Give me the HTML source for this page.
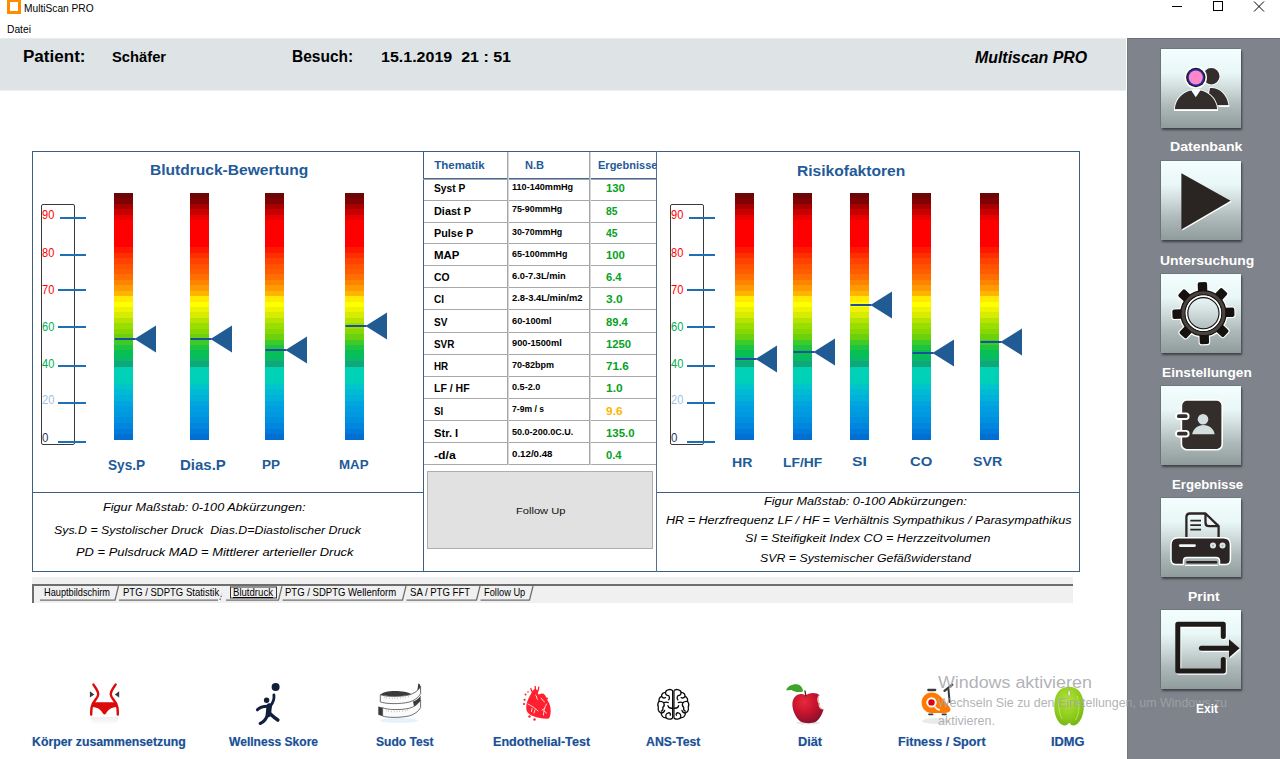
<!DOCTYPE html>
<html lang="de">
<head>
<meta charset="utf-8">
<title>MultiScan PRO</title>
<style>
html,body{margin:0;padding:0}
body{width:1280px;height:759px;position:relative;overflow:hidden;background:#fff;font-family:"Liberation Sans",sans-serif;color:#000}
div,span,svg{box-sizing:border-box}
.a{position:absolute}
.t{position:absolute;white-space:pre;line-height:1;transform-origin:0 0}
#header{left:0;top:38px;width:1126px;height:53px;background:#dee3e6;border-bottom:1px solid #ecf0f2;border-top:1px solid #e9edef}
#sidebar{left:1127px;top:38px;width:153px;height:721px;background:#7f838b;border-top:1px solid #6b6f76;border-left:1px solid #73777e}
.btn{position:absolute;left:1161px;width:80px;height:79px;background:linear-gradient(180deg,#f3fefe 0%,#eaf7f7 30%,#cfdbdb 50%,#aebaba 72%,#909c9c 100%);box-shadow:1px 2px 2px rgba(40,44,50,.75),-1px -1px 0 rgba(110,114,122,.8)}
.btn svg{position:absolute;left:0;top:0}
.panel{border:1px solid #3f5f82}
.hl{position:absolute;height:1px;background:#3f5f82}
.vl{position:absolute;width:1px;background:#3f5f82}
.bar{position:absolute;width:19px;top:193px;height:247px;background:linear-gradient(180deg,#6c0606 0.00px,#6c0606 5.43px,#800202 5.43px,#800202 10.86px,#a70000 10.86px,#a70000 16.28px,#c90000 16.28px,#c90000 21.71px,#eb0000 21.71px,#eb0000 27.14px,#ff0000 27.14px,#ff0000 32.57px,#ff0000 32.57px,#ff0000 38.00px,#ff0000 38.00px,#ff0000 43.43px,#ff0000 43.43px,#ff0000 48.85px,#ff0000 48.85px,#ff0000 54.28px,#ff1800 54.28px,#ff1800 59.71px,#ff2e00 59.71px,#ff2e00 65.14px,#ff4200 65.14px,#ff4200 70.57px,#ff5100 70.57px,#ff5100 75.99px,#ff5b00 75.99px,#ff5b00 81.42px,#ff6e00 81.42px,#ff6e00 86.85px,#ff8300 86.85px,#ff8300 92.28px,#ff9a00 92.28px,#ff9a00 97.71px,#ffb500 97.71px,#ffb500 103.13px,#ffea00 103.13px,#ffea00 108.56px,#ffff00 108.56px,#ffff00 113.99px,#edf300 113.99px,#edf300 119.42px,#d7ec00 119.42px,#d7ec00 124.85px,#b4e400 124.85px,#b4e400 130.27px,#9add00 130.27px,#9add00 135.70px,#88d700 135.70px,#88d700 141.13px,#69d10e 141.13px,#69d10e 146.56px,#3eca28 146.56px,#3eca28 151.99px,#1dc43f 151.99px,#1dc43f 157.42px,#08bf54 157.42px,#08bf54 162.84px,#08b966 162.84px,#08b966 168.27px,#10a878 168.27px,#10a878 173.70px,#00d3b5 173.70px,#00d3b5 179.34px,#00d1b7 179.34px,#00d1b7 184.98px,#00cfba 184.98px,#00cfba 190.62px,#00c5c9 190.62px,#00c5c9 196.25px,#00bbd3 196.25px,#00bbd3 201.89px,#00b1d8 201.89px,#00b1d8 207.53px,#00a6dd 207.53px,#00a6dd 213.17px,#009ee0 213.17px,#009ee0 218.81px,#0099e0 218.81px,#0099e0 224.45px,#0090e0 224.45px,#0090e0 230.08px,#0086df 230.08px,#0086df 235.72px,#007bd9 235.72px,#007bd9 241.36px,#006ed3 241.36px,#006ed3 247.00px)}
.mk{position:absolute;width:43px;height:28px}
.tick{position:absolute;height:2px;background:#1f6fb5}
.scalebox{position:absolute;width:34px;height:241px;top:204px;border:1px solid #3a3a3a;border-radius:2px}
.grow{position:absolute;left:424px;width:232px;height:1px;background:#a9a9a9}
.gcol{position:absolute;top:152px;width:2px;height:313px;background:linear-gradient(90deg,#a6a6a6 0,#a6a6a6 1px,#d6d6d6 1px,#d6d6d6 2px)}
#followup{left:427px;top:471px;width:226px;height:78px;background:#e1e1e1;border:1px solid #adadad}
#tabstrip{left:32px;top:577px;width:1041px;height:26px;background:#f0f0f0}
.tabline{position:absolute;background:#6d6d6d}
.lbl{text-shadow:0 0 1px rgba(31,90,153,.35)}
.wm{color:rgba(163,165,170,.86)}

</style>
</head>
<body>
<div id="titlebar" class="a" style="left:0;top:0;width:1280px;height:22px">
<div class="a" style="left:7px;top:-1px;width:14px;height:15px;border:3px solid #ff8c00;background:#fff"></div>
<span class="t" style="left:24.0px;top:3px;font-size:11px;transform:scaleX(0.926);">MultiScan PRO</span>
<svg class="a" style="left:1165px;top:0" width="110" height="16" viewBox="0 0 110 16" fill="none" stroke="#000" stroke-width="1"><path d="M7 6.5h10"/><rect x="48.5" y="1.5" width="9" height="9"/><path d="M89 1.5l10 10M99 1.5l-10 10"/></svg>
</div>
<div id="menubar" class="a" style="left:0;top:22px;width:1280px;height:16px"></div>
<span class="t" style="left:6.5px;top:24px;font-size:11.2px;transform:scaleX(0.917);">Datei</span>
<div id="header" class="a">
</div>
<span class="t" style="left:22.9px;top:49px;font-size:16px;font-weight:bold;transform:scaleX(1.065);">Patient:</span>
<span class="t" style="left:111.5px;top:50px;font-size:14.3px;font-weight:bold;transform:scaleX(1.031);">Schäfer</span>
<span class="t" style="left:292.2px;top:49px;font-size:16px;font-weight:bold;transform:scaleX(0.969);">Besuch:</span>
<span class="t" style="left:380.5px;top:50px;font-size:14.3px;font-weight:bold;transform:scaleX(1.120);">15.1.2019  21 : 51</span>
<span class="t" style="left:975.3px;top:50px;font-size:16px;font-weight:bold;font-style:italic;transform:scaleX(0.993);">Multiscan PRO</span>
<div id="sidebar" class="a"></div>
<div class="btn" style="top:49px"><svg width="80" height="79" viewBox="0 0 80 79"><g stroke="#fff" stroke-width="1.600" fill="#332e2c" paint-order="stroke"><circle cx="50.300" cy="27.200" r="8.200"/><path d="M49 39C59 38.500 66 46 67.500 56.200H46Z"/><path d="M13.800 60.200C14.600 48.500 24 41 34.800 41C45.600 41 55.200 48.500 56.200 60.200Z"/></g><path d="M13 61.300H57M57.600 57.300H68.400" stroke="#fff" stroke-width="1.400"/><path d="M29.600 40.600L34.800 48.300L40 40.600Z" fill="#f4ffff"/><circle cx="34.800" cy="28.500" r="11.200" fill="#fff"/><circle cx="34.800" cy="28.500" r="9.700" fill="#1e1a18"/><circle cx="34.800" cy="28.500" r="8.400" fill="#2430b8"/><circle cx="34.800" cy="28.500" r="7" fill="#ff86c8"/></svg></div>
<div class="btn" style="top:160.5px"><svg width="80" height="79" viewBox="0 0 80 79"><path d="M21.400 13.200L70.800 40.700L21.400 69.600Z" fill="#fff"/><path d="M20.400 12.200L69.600 39.800L20.400 68.500Z" fill="#2a2422"/></svg></div>
<div class="btn" style="top:274px"><svg width="80" height="79" viewBox="0 0 80 79"><g transform="translate(42.400 39.200)"><g fill="#fff" stroke="#fff" stroke-width="2.200"><rect x="-4.700" y="-31" width="9.400" height="10" rx="1.800" transform="rotate(-2)"/><rect x="-4.700" y="-31" width="9.400" height="10" rx="1.800" transform="rotate(43)"/><rect x="-4.700" y="-31" width="9.400" height="10" rx="1.800" transform="rotate(88)"/><rect x="-4.700" y="-31" width="9.400" height="10" rx="1.800" transform="rotate(133)"/><rect x="-4.700" y="-31" width="9.400" height="10" rx="1.800" transform="rotate(178)"/><rect x="-4.700" y="-31" width="9.400" height="10" rx="1.800" transform="rotate(223)"/><rect x="-4.700" y="-31" width="9.400" height="10" rx="1.800" transform="rotate(268)"/><rect x="-4.700" y="-31" width="9.400" height="10" rx="1.800" transform="rotate(313)"/></g><circle r="20.400" fill="none" stroke="#fff" stroke-width="8"/><g fill="#15110f"><rect x="-4.700" y="-31" width="9.400" height="10" rx="1.800" transform="rotate(-2)"/><rect x="-4.700" y="-31" width="9.400" height="10" rx="1.800" transform="rotate(43)"/><rect x="-4.700" y="-31" width="9.400" height="10" rx="1.800" transform="rotate(88)"/><rect x="-4.700" y="-31" width="9.400" height="10" rx="1.800" transform="rotate(133)"/><rect x="-4.700" y="-31" width="9.400" height="10" rx="1.800" transform="rotate(178)"/><rect x="-4.700" y="-31" width="9.400" height="10" rx="1.800" transform="rotate(223)"/><rect x="-4.700" y="-31" width="9.400" height="10" rx="1.800" transform="rotate(268)"/><rect x="-4.700" y="-31" width="9.400" height="10" rx="1.800" transform="rotate(313)"/></g><circle r="20.400" fill="none" stroke="#15110f" stroke-width="5.600"/><circle r="20.400" fill="none" stroke="#4a4441" stroke-width="3"/><circle r="17" fill="none" stroke="#fff" stroke-width="1.600"/><circle r="15.600" fill="none" stroke="#111" stroke-width="1.100"/></g></svg></div>
<div class="btn" style="top:386px"><svg width="80" height="79" viewBox="0 0 80 79"><rect x="20.400" y="14" width="40.800" height="49.700" rx="5.500" fill="#332e2c" stroke="#fff" stroke-width="1.600"/><g fill="#332e2c" stroke="#fff" stroke-width="1.900"><rect x="15" y="27.400" width="12.600" height="5.600" rx="2.800"/><rect x="15" y="44.900" width="12.600" height="5.600" rx="2.800"/></g><g fill="#d3dede"><circle cx="42" cy="33.300" r="5.300"/><path d="M31.200 48.300C32 42.500 37 38.900 42.400 38.900C48 38.900 53 42.500 53.600 48.300Z"/></g></svg></div>
<div class="btn" style="top:498px"><svg width="80" height="79" viewBox="0 0 80 79"><path d="M25.400 40V19.200Q25.400 15.500 29 15.500H44.500L57.600 28.200V40" fill="none" stroke="#2b2624" stroke-width="2.300" stroke-linejoin="round"/><path d="M44.500 15.500V24.500Q44.500 28.200 48 28.200H57.600" fill="none" stroke="#2b2624" stroke-width="2.300"/><path d="M29.300 22.700H40M29.300 27.200H40M29.300 31.700H40" stroke="#2b2624" stroke-width="1.700"/><path d="M17 39.700H62.400Q69.400 39.700 69.400 46.700V61.400Q69.400 66.400 64.400 66.400H58.500V63Q58.500 59.500 55 59.500H26Q22.500 59.500 22.500 63V66.400H15Q10 66.400 10 61.400V46.700Q10 39.700 17 39.700Z" fill="#2b2624" stroke="#fff" stroke-width="1.500"/><path d="M26.500 64.200H55" stroke="#2b2624" stroke-width="2.600" stroke-linecap="round"/><path d="M24 67.400H57" stroke="#fff" stroke-width="1.200"/><path d="M19.200 47.600H33.600" stroke="#eef6f6" stroke-width="2.600" stroke-linecap="round"/><circle cx="52" cy="47.600" r="3" fill="#dfe8e8"/><circle cx="61.500" cy="47.600" r="3" fill="#dfe8e8"/><circle cx="52" cy="47.600" r="1.100" fill="#aab4b4"/><circle cx="61.500" cy="47.600" r="1.100" fill="#aab4b4"/></svg></div>
<div class="btn" style="top:610px"><svg width="80" height="79" viewBox="0 0 80 79"><g transform="translate(1 1.200)"><path d="M62.300 26.600V14.300H16.800V61H62.300V49.600" fill="none" stroke="#fff" stroke-width="5" stroke-linejoin="round" stroke-linecap="round"/><path d="M40.400 38.200H68" stroke="#fff" stroke-width="5" stroke-linecap="round"/><path d="M68 29.200L78.600 38.200L68 47.400Z" fill="#fff"/></g><path d="M62.300 26.600V14.300H16.800V61H62.300V49.600" fill="none" stroke="#1e1a18" stroke-width="5" stroke-linejoin="round" stroke-linecap="round"/><path d="M40.400 38.200H68" stroke="#1e1a18" stroke-width="5" stroke-linecap="round"/><path d="M68 29.200L78.600 38.200L68 47.400Z" fill="#1e1a18"/></svg></div>
<span class="t" style="left:1170.2px;top:140px;font-size:13.2px;font-weight:bold;color:#fff;transform:scaleX(1.074);">Datenbank</span>
<span class="t" style="left:1159.8px;top:254px;font-size:13.2px;font-weight:bold;color:#fff;transform:scaleX(1.055);">Untersuchung</span>
<span class="t" style="left:1162.0px;top:366px;font-size:13.2px;font-weight:bold;color:#fff;transform:scaleX(1.038);">Einstellungen</span>
<span class="t" style="left:1172.0px;top:478px;font-size:13.2px;font-weight:bold;color:#fff;">Ergebnisse</span>
<span class="t" style="left:1187.5px;top:590px;font-size:13.2px;font-weight:bold;color:#fff;transform:scaleX(1.054);">Print</span>
<span class="t" style="left:1195.6px;top:702px;font-size:13.2px;font-weight:bold;color:#fff;transform:scaleX(0.907);z-index:2;">Exit</span>
<div id="main" class="a panel" style="left:32px;top:151px;width:1048px;height:421px"></div>
<div class="hl" style="left:32px;top:492px;width:392px"></div>
<div class="hl" style="left:656px;top:492px;width:423px"></div>
<div class="vl" style="left:423px;top:151px;height:421px"></div>
<div class="vl" style="left:656px;top:151px;height:421px;background:#566f90"></div>
<div class="scalebox" style="left:41px"></div>
<div class="tick" style="left:60.0px;top:217.0px;width:26.0px"></div>
<div class="tick" style="left:60.0px;top:253.5px;width:26.0px"></div>
<div class="tick" style="left:57.5px;top:289.0px;width:28.5px"></div>
<div class="tick" style="left:57.5px;top:326.0px;width:28.5px"></div>
<div class="tick" style="left:57.5px;top:364.7px;width:28.5px"></div>
<div class="tick" style="left:57.5px;top:402.0px;width:28.5px"></div>
<div class="tick" style="left:57.5px;top:441.0px;width:28.5px"></div>
<span class="t" style="left:42.2px;top:208px;font-size:13.2px;color:#ff0000;transform:scaleX(0.837);">90</span>
<span class="t" style="left:42.2px;top:246px;font-size:13.2px;color:#ff0000;transform:scaleX(0.837);">80</span>
<span class="t" style="left:42.2px;top:283px;font-size:13.2px;color:#ff0000;transform:scaleX(0.837);">70</span>
<span class="t" style="left:42.2px;top:320px;font-size:13.2px;color:#00b050;transform:scaleX(0.837);">60</span>
<span class="t" style="left:42.2px;top:357px;font-size:13.2px;color:#00b050;transform:scaleX(0.837);">40</span>
<span class="t" style="left:42.2px;top:393px;font-size:13.2px;color:#9dc3e6;transform:scaleX(0.837);">20</span>
<span class="t" style="left:42.2px;top:431px;font-size:13.2px;color:#1f3864;transform:scaleX(0.871);">0</span>
<div class="bar" style="left:114.0px"></div>
<svg class="mk" style="left:114.0px;top:325.0px" viewBox="0 0 43 28"><path d="M0.5 14h21" stroke="#1f4f9c" stroke-width="2" fill="none"/><path d="M20.5 14L42 0.5v27z" fill="#215b94"/></svg>
<div class="bar" style="left:190.0px"></div>
<svg class="mk" style="left:190.0px;top:325.0px" viewBox="0 0 43 28"><path d="M0.5 14h21" stroke="#1f4f9c" stroke-width="2" fill="none"/><path d="M20.5 14L42 0.5v27z" fill="#215b94"/></svg>
<div class="bar" style="left:265.0px"></div>
<svg class="mk" style="left:265.0px;top:336.3px" viewBox="0 0 43 28"><path d="M0.5 14h21" stroke="#1f4f9c" stroke-width="2" fill="none"/><path d="M20.5 14L42 0.5v27z" fill="#215b94"/></svg>
<div class="bar" style="left:345.0px"></div>
<svg class="mk" style="left:345.0px;top:312.3px" viewBox="0 0 43 28"><path d="M0.5 14h21" stroke="#1f4f9c" stroke-width="2" fill="none"/><path d="M20.5 14L42 0.5v27z" fill="#215b94"/></svg>
<div class="scalebox" style="left:670px"></div>
<div class="tick" style="left:689.2px;top:217.0px;width:26.0px"></div>
<div class="tick" style="left:689.2px;top:253.5px;width:26.0px"></div>
<div class="tick" style="left:686.7px;top:289.0px;width:28.5px"></div>
<div class="tick" style="left:686.7px;top:326.0px;width:28.5px"></div>
<div class="tick" style="left:686.7px;top:364.7px;width:28.5px"></div>
<div class="tick" style="left:686.7px;top:402.0px;width:28.5px"></div>
<div class="tick" style="left:686.7px;top:441.0px;width:28.5px"></div>
<span class="t" style="left:671.4px;top:208px;font-size:13.2px;color:#ff0000;transform:scaleX(0.837);">90</span>
<span class="t" style="left:671.4px;top:246px;font-size:13.2px;color:#ff0000;transform:scaleX(0.837);">80</span>
<span class="t" style="left:671.4px;top:283px;font-size:13.2px;color:#ff0000;transform:scaleX(0.837);">70</span>
<span class="t" style="left:671.4px;top:320px;font-size:13.2px;color:#00b050;transform:scaleX(0.837);">60</span>
<span class="t" style="left:671.4px;top:357px;font-size:13.2px;color:#00b050;transform:scaleX(0.837);">40</span>
<span class="t" style="left:671.4px;top:393px;font-size:13.2px;color:#9dc3e6;transform:scaleX(0.837);">20</span>
<span class="t" style="left:671.4px;top:431px;font-size:13.2px;color:#1f3864;transform:scaleX(0.871);">0</span>
<div class="bar" style="left:735.0px"></div>
<svg class="mk" style="left:735.0px;top:345.0px" viewBox="0 0 43 28"><path d="M0.5 14h21" stroke="#1f4f9c" stroke-width="2" fill="none"/><path d="M20.5 14L42 0.5v27z" fill="#215b94"/></svg>
<div class="bar" style="left:793.0px"></div>
<svg class="mk" style="left:793.0px;top:338.0px" viewBox="0 0 43 28"><path d="M0.5 14h21" stroke="#1f4f9c" stroke-width="2" fill="none"/><path d="M20.5 14L42 0.5v27z" fill="#215b94"/></svg>
<div class="bar" style="left:850.0px"></div>
<svg class="mk" style="left:850.0px;top:291.3px" viewBox="0 0 43 28"><path d="M0.5 14h21" stroke="#1f4f9c" stroke-width="2" fill="none"/><path d="M20.5 14L42 0.5v27z" fill="#215b94"/></svg>
<div class="bar" style="left:912.0px"></div>
<svg class="mk" style="left:912.0px;top:339.3px" viewBox="0 0 43 28"><path d="M0.5 14h21" stroke="#1f4f9c" stroke-width="2" fill="none"/><path d="M20.5 14L42 0.5v27z" fill="#215b94"/></svg>
<div class="bar" style="left:980.0px"></div>
<svg class="mk" style="left:980.0px;top:328.4px" viewBox="0 0 43 28"><path d="M0.5 14h21" stroke="#1f4f9c" stroke-width="2" fill="none"/><path d="M20.5 14L42 0.5v27z" fill="#215b94"/></svg>
<span class="t" style="left:150.0px;top:162px;font-size:15px;font-weight:bold;color:#1f5a99;transform:scaleX(1.037);">Blutdruck-Bewertung</span>
<span class="t" style="left:796.6px;top:163px;font-size:15px;font-weight:bold;color:#1f5a99;transform:scaleX(1.038);">Risikofaktoren</span>
<span class="t" style="left:107.5px;top:457px;font-size:15px;font-weight:bold;color:#1f5a99;transform:scaleX(0.910);">Sys.P</span>
<span class="t" style="left:180.0px;top:457px;font-size:15px;font-weight:bold;color:#1f5a99;">Dias.P</span>
<span class="t" style="left:261.9px;top:458px;font-size:13.4px;font-weight:bold;color:#1f5a99;transform:scaleX(1.009);">PP</span>
<span class="t" style="left:339.4px;top:458px;font-size:13.4px;font-weight:bold;color:#1f5a99;transform:scaleX(0.992);">MAP</span>
<span class="t" style="left:731.8px;top:456px;font-size:13.6px;font-weight:bold;color:#1f5a99;transform:scaleX(1.040);">HR</span>
<span class="t" style="left:783.0px;top:456px;font-size:13.6px;font-weight:bold;color:#1f5a99;transform:scaleX(1.018);">LF/HF</span>
<span class="t" style="left:852.0px;top:455px;font-size:13.6px;font-weight:bold;color:#1f5a99;transform:scaleX(1.152);">SI</span>
<span class="t" style="left:909.5px;top:455px;font-size:13.6px;font-weight:bold;color:#1f5a99;transform:scaleX(1.095);">CO</span>
<span class="t" style="left:973.0px;top:455px;font-size:13.6px;font-weight:bold;color:#1f5a99;transform:scaleX(1.045);">SVR</span>
<span class="t" style="left:103.3px;top:501px;font-size:11.7px;font-style:italic;transform:scaleX(1.085);">Figur Maßstab: 0-100 Abkürzungen:</span>
<span class="t" style="left:53.8px;top:524px;font-size:11.7px;font-style:italic;transform:scaleX(1.057);">Sys.D = Systolischer Druck  Dias.D=Diastolischer Druck</span>
<span class="t" style="left:76.2px;top:546px;font-size:11.7px;font-style:italic;transform:scaleX(1.104);">PD = Pulsdruck MAD = Mittlerer arterieller Druck</span>
<span class="t" style="left:764.0px;top:495px;font-size:11.7px;font-style:italic;transform:scaleX(1.086);">Figur Maßstab: 0-100 Abkürzungen:</span>
<span class="t" style="left:666.0px;top:514px;font-size:11.7px;font-style:italic;transform:scaleX(1.077);">HR = Herzfrequenz LF / HF = Verhältnis Sympathikus / Parasympathikus</span>
<span class="t" style="left:745.0px;top:532px;font-size:11.7px;font-style:italic;transform:scaleX(1.077);">SI = Steifigkeit Index CO = Herzzeitvolumen</span>
<span class="t" style="left:760.0px;top:552px;font-size:11.7px;font-style:italic;transform:scaleX(1.056);">SVR = Systemischer Gefäßwiderstand</span>
<div id="grid" class="a" style="left:424px;top:152px;width:233px;height:313px;overflow:hidden">
</div>
<div class="grow" style="top:178px;height:2px;background:linear-gradient(180deg,#4f6789 0,#4f6789 1px,#9aa8bd 1px,#9aa8bd 2px);left:423px;width:233px"></div>
<div class="grow" style="top:200px"></div>
<div class="grow" style="top:222px"></div>
<div class="grow" style="top:243px"></div>
<div class="grow" style="top:265px"></div>
<div class="grow" style="top:287px"></div>
<div class="grow" style="top:309px"></div>
<div class="grow" style="top:332px"></div>
<div class="grow" style="top:354px"></div>
<div class="grow" style="top:376px"></div>
<div class="grow" style="top:398px"></div>
<div class="grow" style="top:420px"></div>
<div class="grow" style="top:442px"></div>
<div class="grow" style="top:464px"></div>
<div class="gcol" style="left:507px"></div>
<div class="gcol" style="left:589px"></div>
<div class="a" style="left:590px;top:152px;width:66.5px;height:26px;overflow:hidden">
<span class="t" style="left:7.6px;top:8px;font-size:11.5px;font-weight:bold;color:#1f5a99;transform:scaleX(0.958);">Ergebnisse</span>
</div>
<span class="t" style="left:434.2px;top:160px;font-size:11.5px;font-weight:bold;color:#1f5a99;">Thematik</span>
<span class="t" style="left:525.0px;top:160px;font-size:11.5px;font-weight:bold;color:#1f5a99;transform:scaleX(0.964);">N.B</span>
<span class="t" style="left:434.0px;top:183px;font-size:11.5px;font-weight:bold;transform:scaleX(0.888);">Syst P</span>
<span class="t" style="left:511.7px;top:183px;font-size:8.4px;font-weight:bold;transform:scaleX(1.085);">110-140mmHg</span>
<span class="t" style="left:606.3px;top:183px;font-size:11.5px;font-weight:bold;color:#06a224;transform:scaleX(0.984);">130</span>
<span class="t" style="left:434.0px;top:206px;font-size:11.5px;font-weight:bold;transform:scaleX(0.946);">Diast P</span>
<span class="t" style="left:511.7px;top:205px;font-size:8.4px;font-weight:bold;transform:scaleX(1.058);">75-90mmHg</span>
<span class="t" style="left:606.3px;top:206px;font-size:11.5px;font-weight:bold;color:#06a224;transform:scaleX(0.896);">85</span>
<span class="t" style="left:434.0px;top:228px;font-size:11.5px;font-weight:bold;transform:scaleX(0.943);">Pulse P</span>
<span class="t" style="left:511.7px;top:228px;font-size:8.4px;font-weight:bold;transform:scaleX(1.058);">30-70mmHg</span>
<span class="t" style="left:606.3px;top:228px;font-size:11.5px;font-weight:bold;color:#06a224;transform:scaleX(0.896);">45</span>
<span class="t" style="left:434.0px;top:250px;font-size:11.5px;font-weight:bold;transform:scaleX(0.993);">MAP</span>
<span class="t" style="left:511.7px;top:250px;font-size:8.4px;font-weight:bold;transform:scaleX(1.061);">65-100mmHg</span>
<span class="t" style="left:606.3px;top:250px;font-size:11.5px;font-weight:bold;color:#06a224;transform:scaleX(0.984);">100</span>
<span class="t" style="left:434.0px;top:272px;font-size:11.5px;font-weight:bold;transform:scaleX(0.896);">CO</span>
<span class="t" style="left:511.7px;top:272px;font-size:8.4px;font-weight:bold;transform:scaleX(1.110);">6.0-7.3L/min</span>
<span class="t" style="left:606.3px;top:272px;font-size:11.5px;font-weight:bold;color:#06a224;transform:scaleX(0.976);">6.4</span>
<span class="t" style="left:434.0px;top:294px;font-size:11.5px;font-weight:bold;transform:scaleX(0.867);">CI</span>
<span class="t" style="left:511.7px;top:294px;font-size:8.4px;font-weight:bold;transform:scaleX(1.122);">2.8-3.4L/min/m2</span>
<span class="t" style="left:606.3px;top:294px;font-size:11.5px;font-weight:bold;color:#06a224;transform:scaleX(1.039);">3.0</span>
<span class="t" style="left:434.0px;top:317px;font-size:11.5px;font-weight:bold;transform:scaleX(0.874);">SV</span>
<span class="t" style="left:511.7px;top:317px;font-size:8.4px;font-weight:bold;transform:scaleX(1.101);">60-100ml</span>
<span class="t" style="left:606.3px;top:317px;font-size:11.5px;font-weight:bold;color:#06a224;transform:scaleX(0.974);">89.4</span>
<span class="t" style="left:434.0px;top:339px;font-size:11.5px;font-weight:bold;transform:scaleX(0.863);">SVR</span>
<span class="t" style="left:511.7px;top:339px;font-size:8.4px;font-weight:bold;transform:scaleX(1.102);">900-1500ml</span>
<span class="t" style="left:606.3px;top:339px;font-size:11.5px;font-weight:bold;color:#06a224;transform:scaleX(0.981);">1250</span>
<span class="t" style="left:434.0px;top:361px;font-size:11.5px;font-weight:bold;transform:scaleX(0.855);">HR</span>
<span class="t" style="left:511.7px;top:361px;font-size:8.4px;font-weight:bold;transform:scaleX(1.076);">70-82bpm</span>
<span class="t" style="left:606.3px;top:361px;font-size:11.5px;font-weight:bold;color:#06a224;transform:scaleX(1.019);">71.6</span>
<span class="t" style="left:434.0px;top:383px;font-size:11.5px;font-weight:bold;transform:scaleX(0.914);">LF / HF</span>
<span class="t" style="left:511.7px;top:383px;font-size:8.4px;font-weight:bold;transform:scaleX(1.086);">0.5-2.0</span>
<span class="t" style="left:606.3px;top:383px;font-size:11.5px;font-weight:bold;color:#06a224;transform:scaleX(1.039);">1.0</span>
<span class="t" style="left:434.0px;top:406px;font-size:11.5px;font-weight:bold;transform:scaleX(0.843);">SI</span>
<span class="t" style="left:511.7px;top:405px;font-size:8.4px;font-weight:bold;transform:scaleX(1.024);">7-9m / s</span>
<span class="t" style="left:606.3px;top:406px;font-size:11.5px;font-weight:bold;color:#ffb400;transform:scaleX(1.039);">9.6</span>
<span class="t" style="left:434.0px;top:428px;font-size:11.5px;font-weight:bold;transform:scaleX(0.970);">Str. I</span>
<span class="t" style="left:511.7px;top:428px;font-size:8.4px;font-weight:bold;transform:scaleX(1.080);">50.0-200.0C.U.</span>
<span class="t" style="left:606.3px;top:428px;font-size:11.5px;font-weight:bold;color:#06a224;transform:scaleX(0.994);">135.0</span>
<span class="t" style="left:434.0px;top:450px;font-size:11.5px;font-weight:bold;transform:scaleX(1.064);">-d/a</span>
<span class="t" style="left:511.7px;top:450px;font-size:8.4px;font-weight:bold;transform:scaleX(1.160);">0.12/0.48</span>
<span class="t" style="left:606.3px;top:450px;font-size:11.5px;font-weight:bold;color:#06a224;transform:scaleX(0.976);">0.4</span>
<div id="followup" class="a"></div>
<span class="t" style="left:515.7px;top:506px;font-size:9.6px;color:#111;transform:scaleX(1.160);">Follow Up</span>
<div id="tabstrip" class="a"></div>
<div class="tabline" style="left:32px;top:584px;width:1041px;height:2px"></div>
<div class="tabline" style="left:32px;top:584px;width:2px;height:19px"></div>
<svg class="a" style="left:32px;top:584px" width="520" height="20" viewBox="0 0 520 20" fill="none" stroke="#6d6d6d" stroke-width="1.3"><path d="M8 16.2h75l3.5-14"/><path d="M87 16.2h99"/><path d="M188 16l2-6" stroke-dasharray="1.5 1.5"/><path d="M194 16.2h52.500l3.500-14"/><path d="M250.500 16.200h120l3.500-14"/><path d="M374.500 16.200h70l3.500-14"/><path d="M448.500 16.200h49l3.500-14"/><rect x="198.500" y="3" width="46" height="11" stroke="#333" stroke-width="1"/></svg>
<span class="t" style="left:44.0px;top:587px;font-size:10.8px;transform:scaleX(0.853);">Hauptbildschirm</span>
<span class="t" style="left:122.5px;top:587px;font-size:10.8px;transform:scaleX(0.881);">PTG / SDPTG Statistik</span>
<span class="t" style="left:233.2px;top:587px;font-size:10.8px;transform:scaleX(0.888);text-decoration:underline;">Blutdruck</span>
<span class="t" style="left:285.2px;top:587px;font-size:10.8px;transform:scaleX(0.883);">PTG / SDPTG Wellenform</span>
<span class="t" style="left:409.5px;top:587px;font-size:10.8px;transform:scaleX(0.887);">SA / PTG FFT</span>
<span class="t" style="left:483.5px;top:587px;font-size:10.8px;transform:scaleX(0.860);">Follow Up</span>
<svg class="a" style="left:84px;top:678px" width="42" height="52" viewBox="84 678 42 52"><defs><linearGradient id="rf" x1="0" y1="0" x2="0" y2="1"><stop offset="0" stop-color="#ccc" stop-opacity=".3"/><stop offset="1" stop-color="#bbb" stop-opacity="0"/></linearGradient></defs><g fill="none" stroke="#dc0a0a" stroke-width="2.4" stroke-linecap="round"><path d="M93.400 684.600C95.800 688 98.400 691 98.200 694.500C98 699 92.500 700.500 91.600 707.500C91.200 710.500 91.200 712.500 91.200 714.500"/><path d="M115.600 684.600C113.200 688 110.600 691 110.800 694.500C111 699 116.500 700.500 117.400 707.500C117.800 710.500 117.800 712.500 117.800 714.500"/></g><path d="M94.500 702.300H114.500C116 703.500 117 705 117.500 707C111.500 706.500 107.500 710.500 105.800 713.800Q104.500 715 103.200 713.800C101.500 710.500 97.500 706.500 91.500 707C92 705 93 703.500 94.500 702.300Z" fill="#dc0a0a"/><path d="M89.900 691.200L94.300 694.400L89.900 697.600Z" fill="#3a3a3a"/><path d="M119.200 691.200L114.800 694.400L119.200 697.600Z" fill="#3a3a3a"/><path d="M91 717h27v4c-4 5-23 5-27 0z" fill="url(#rf)"/></svg>
<svg class="a" style="left:250px;top:678px" width="36" height="52" viewBox="250 678 36 52"><g fill="#101f3c"><circle cx="275.600" cy="686.900" r="4"/><circle cx="266.600" cy="700.200" r="2.700"/></g><g fill="none" stroke="#101f3c" stroke-linecap="round" stroke-linejoin="round"><path d="M273.900 694.800C274.500 699 272.500 703.500 270.200 706.500" stroke-width="2.800"/><path d="M269.300 706C268.800 709 268.600 712 268.400 714.500" stroke-width="5.400"/><path d="M267.500 706.200C263.500 706.200 259.500 707.500 257.400 709.800" stroke-width="3"/><path d="M267.800 714C266.500 718.500 264 722 260.200 723.400" stroke-width="3.200"/><path d="M269.800 713.500C272.500 716 275.500 718.500 277.800 720" stroke-width="3.600"/></g></svg>
<svg class="a" style="left:374px;top:680px" width="52" height="46" viewBox="374 680 52 46"><ellipse cx="399" cy="720.500" rx="19" ry="2.600" fill="#cfe8f7" opacity=".55"/><path d="M380.500 694.800C383 689.800 405 689.800 411.500 694.300C405 697 385 696.800 380.500 694.800Z" fill="#3b3b3b"/><path d="M413 701.500C416.500 700.500 419.500 698 420.600 695.500V700.500C419.500 703 417 705 414 706.500Z" fill="#3b3b3b"/><path d="M417.400 690.500L418.300 683.600C419.600 683 420.900 686 420.700 690.500Z" fill="#3b3b3b"/><path d="M378.300 706.600L382.800 707.800V716.200L378.300 714.800Z" fill="#3b3b3b"/><g fill="#fbfbfb" stroke="#4a4a4a" stroke-width=".8" stroke-linejoin="round"><path d="M380.300 694.600C385 696.800 400 697.200 409.500 694.800C414 693.500 418.500 690.500 420.600 686.500V693.700C418.500 697.700 414 700.700 409.500 702C400 704.400 385 704 380.300 701.800Z"/><path d="M382.600 707.700C387 709.800 400 710.400 409.500 708.200C414 707 418.500 704 420.600 700V707.600C418.500 711.600 414 714.600 409.500 715.800C400 718 387 717.800 382.600 716Z"/></g><g fill="none" stroke="#9a9a9a" stroke-width="1.300" stroke-dasharray=".5 2.200"><path d="M384 697.500C390 698.800 402 698.600 410 696.200"/><path d="M386 710.800C391 712 402 712 410 709.800"/></g></svg>
<svg class="a" style="left:518px;top:680px" width="40" height="46" viewBox="518 680 40 46"><g fill="#ff1f2e"><path d="M531.200 693.600C528.500 698 525.200 704.500 526.600 710.500C528 715.500 538 719 549 718.600C551.600 714 551.200 706 548.200 701.500C546.500 698.500 545.800 695 543.500 693.700C540.500 692.700 539.500 695 537.800 694.200L538.500 690.500L534.500 689L532.500 691Z"/><path d="M531.700 692.500L530 688.500L531.200 688L533 692ZM534.800 690L534.500 686L535.800 686L536.200 690ZM537.500 690.500L538.300 686.500L539.500 686.800L538.800 691Z"/><circle cx="525.500" cy="694.500" r="1"/><circle cx="524.600" cy="699.800" r="1.100"/><circle cx="524" cy="704" r="1.100"/><circle cx="529.500" cy="716.500" r="1.200"/><circle cx="534.500" cy="719.500" r="1.200"/><circle cx="528" cy="692" r=".8"/><circle cx="547" cy="698.500" r="1"/></g><g fill="none" stroke="#fff" stroke-width=".9" stroke-linecap="round" opacity=".9"><path d="M535.500 695C537.500 696 536 698 537.500 699.500"/><path d="M541 698C543 699 542.500 701.500 544.500 702"/><path d="M528 704C532 706 536 709 538 711"/><path d="M532 708.500L531.500 711.500M535 710L534 713"/><path d="M546.500 704C544.500 707.500 543.500 711 543.500 715"/><path d="M544.800 708.500L542 710M544 711L546.500 713"/></g></svg>
<svg class="a" style="left:652px;top:684px" width="44" height="40" viewBox="652 684 44 40"><g transform="translate(673.300 0) scale(.94 1) translate(-673.300 0)" fill="none" stroke="#0b0b0b" stroke-width="1.350" stroke-linecap="round" stroke-linejoin="round"><path d="M674 691.200C674 689.800 676 689.300 678 689.600C680 689.900 681.300 691 681.600 692.300C684 692.500 685.800 694.200 685.800 696.300C687.800 697.300 688.900 699.300 688.400 701.400C689.700 702.800 690.200 705 689.200 707C689.800 709.500 688.600 712 686.200 713C686 715.800 683.800 717.800 681 717.800C679.500 719.300 676.500 719.600 674.800 718.600C674.200 718.300 674 717.800 674 717.200Z"/><path d="M681.600 692.300C681.800 694.300 680.300 695.600 678.400 695.600C677.200 696.800 677 698.800 678.200 699.800M685.800 696.300C684.800 697.800 683 698.200 681.600 697.600M688.400 701.400C686.500 701.200 684.500 701.600 683.500 702.800C682 702 680 702 678.600 702.600M683.500 702.800C682.600 704.500 683 706.500 684.500 707.500C684 709 684.500 710.500 686 711.200M674 708.200C676 708.400 678.500 707.800 679 705.600M686.200 713C684.500 713 683 712 682.500 710.500M681 717.800C681.800 715.500 680.800 713.200 678.600 712.800C676.800 712.600 675.800 714 676.600 715.200"/><g transform="translate(1346.600 0) scale(-1 1)"><path d="M674 691.200C674 689.800 676 689.300 678 689.600C680 689.900 681.300 691 681.600 692.300C684 692.500 685.800 694.200 685.800 696.300C687.800 697.300 688.900 699.300 688.400 701.400C689.700 702.800 690.200 705 689.200 707C689.800 709.500 688.600 712 686.200 713C686 715.800 683.800 717.800 681 717.800C679.500 719.300 676.500 719.600 674.800 718.600C674.200 718.300 674 717.800 674 717.200Z"/><path d="M681.600 692.300C681.800 694.300 680.300 695.600 678.400 695.600C677.200 696.800 677 698.800 678.200 699.800M685.800 696.300C684.800 697.800 683 698.200 681.600 697.600M688.400 701.400C686.500 701.200 684.500 701.600 683.500 702.800C682 702 680 702 678.600 702.600M683.500 702.800C682.600 704.500 683 706.500 684.500 707.500C684 709 684.500 710.500 686 711.200M674 708.200C676 708.400 678.500 707.800 679 705.600M686.200 713C684.500 713 683 712 682.500 710.500M681 717.800C681.800 715.500 680.800 713.200 678.600 712.800C676.800 712.600 675.800 714 676.600 715.200"/></g></g></svg>
<svg class="a" style="left:782px;top:680px" width="46" height="48" viewBox="782 680 46 48"><defs><radialGradient id="ap" cx=".38" cy=".3" r=".8"><stop offset="0" stop-color="#e8283c"/><stop offset=".45" stop-color="#c8142e"/><stop offset="1" stop-color="#7a0f2c"/></radialGradient></defs><ellipse cx="808" cy="723" rx="12" ry="1.600" fill="#ddd" opacity=".7"/><path d="M805.500 695.500C799 691.500 793 696.500 792.400 703C791.800 710 796 718 800.500 721.600C804 723.600 812 723.600 815.500 722C819.500 719.500 822 714.500 823.600 709.200C820.500 709 819.300 706 819.800 703.500C817.800 701 817.800 697.500 819.600 695.300C816.500 692 809 692.200 805.500 695.500Z" fill="url(#ap)"/><path d="M819.600 695.300C817.800 697.500 817.800 701 819.800 703.500C819.300 706 820.500 709 823.600 709.200L822.500 709.500C819.500 709 818.200 706 818.700 703.800C816.800 701.500 816.800 697.500 818.600 695.300Z" fill="#f3e6c6"/><path d="M805 690.800C805.300 692.500 805.500 694 805.900 695.800" stroke="#4a2412" stroke-width="1.300" fill="none" stroke-linecap="round"/><path d="M786.100 690.300C787.500 686 792.500 683.800 797 684.300C800.500 684.800 802.500 687.500 803.200 691.200C799.500 692.800 795 692.200 791.500 690C789.500 689.800 787.800 690.500 786.100 690.300Z" fill="#3fa32c"/></svg>
<svg class="a" style="left:914px;top:680px" width="44" height="46" viewBox="914 680 44 46"><ellipse cx="936" cy="721" rx="14" ry="3" fill="#d8d8d8" opacity=".55"/><path d="M931.500 692.500C937 692.500 940.500 696 944 700.500C946.500 703.800 950.800 707.500 950.500 709.800C950.200 712.800 946 713.100 942 713.100H931.500C926 713.100 921.600 708.500 921.600 702.800C921.600 697.100 926 692.500 931.500 692.500Z" fill="#ff7a00"/><circle cx="931.500" cy="702.400" r="5.200" fill="#fff"/><circle cx="931.500" cy="702.400" r="3.200" fill="#dc0012"/><path d="M934.500 706.500C936 708.500 937.500 709.800 940 710.200" stroke="#fff" stroke-width="1.300" fill="none"/><g stroke="#3a3a3a" stroke-linecap="round" fill="none"><path d="M928.300 690H935.200" stroke-width="2.300"/><path d="M949.600 702L948.500 689.500" stroke-width="2"/><path d="M944.500 690.800L952.300 684.600" stroke-width="2.300"/><path d="M929 714.300H932.600M942.400 714.300H946" stroke-width="1.700"/></g></svg>
<svg class="a" style="left:1050px;top:682px" width="38" height="48" viewBox="1050 682 38 48"><defs><radialGradient id="ms" cx=".45" cy=".35" r=".75"><stop offset="0" stop-color="#b4e23a"/><stop offset=".6" stop-color="#8ecb1c"/><stop offset="1" stop-color="#6fae10"/></radialGradient></defs><path d="M1069 686.800C1077 686.800 1082.500 692 1083.600 703C1084.500 712 1082 721 1076 724.800C1072.500 726.300 1071 725 1069.200 722.800C1067.400 725 1065.500 726.300 1062 724.800C1056 721 1053.600 712 1054.400 703C1055.500 692 1061 686.800 1069 686.800Z" fill="url(#ms)"/><rect x="1068" y="690.500" width="2.200" height="5.500" rx="1.100" fill="#f4f8ee" stroke="#7a9a40" stroke-width=".5"/><path d="M1060 697C1058 704 1058.500 712 1062 719M1077 696C1080 704 1079.500 713 1075.500 720" stroke="#c9ec6a" stroke-width="1" fill="none" opacity=".7"/></svg>
<span class="t lbl" style="left:32.0px;top:736px;font-size:12.3px;font-weight:bold;color:#1b4f96;">Körper zusammensetzung</span>
<span class="t lbl" style="left:228.8px;top:736px;font-size:12.3px;font-weight:bold;color:#1b4f96;transform:scaleX(0.982);">Wellness Skore</span>
<span class="t lbl" style="left:375.5px;top:736px;font-size:12.3px;font-weight:bold;color:#1b4f96;transform:scaleX(0.984);">Sudo Test</span>
<span class="t lbl" style="left:493.0px;top:736px;font-size:12.3px;font-weight:bold;color:#1b4f96;transform:scaleX(1.025);">Endothelial-Test</span>
<span class="t lbl" style="left:646.0px;top:736px;font-size:12.3px;font-weight:bold;color:#1b4f96;">ANS-Test</span>
<span class="t lbl" style="left:798.0px;top:736px;font-size:12.3px;font-weight:bold;color:#1b4f96;transform:scaleX(1.037);">Diät</span>
<span class="t lbl" style="left:898.0px;top:736px;font-size:12.3px;font-weight:bold;color:#1b4f96;transform:scaleX(1.026);">Fitness / Sport</span>
<span class="t lbl" style="left:1051.0px;top:736px;font-size:12.3px;font-weight:bold;color:#1b4f96;transform:scaleX(1.046);">IDMG</span>
<span class="t wm" style="left:937.8px;top:675px;font-size:16px;transform:scaleX(1.116);">Windows aktivieren</span>
<span class="t wm" style="left:937.8px;top:697px;font-size:12.3px;transform:scaleX(1.010);">Wechseln Sie zu den Einstellungen, um Windows zu</span>
<span class="t wm" style="left:937.8px;top:715px;font-size:12.3px;transform:scaleX(1.017);">aktivieren.</span>
</body>
</html>
